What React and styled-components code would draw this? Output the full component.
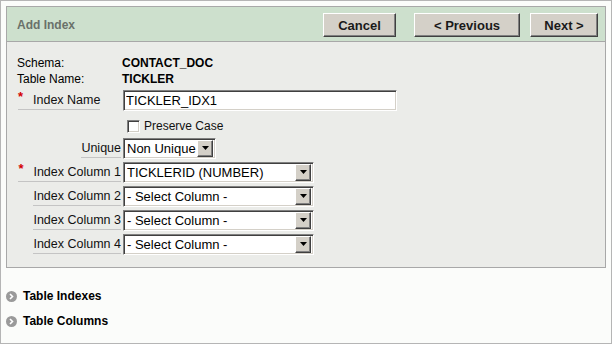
import styled, { createGlobalStyle } from "styled-components";

const GlobalStyle = createGlobalStyle`
  html, body {
    margin: 0;
    padding: 0;
    background: #fbfcfa;
  }
  * {
    box-sizing: border-box;
  }
`;

const Frame = styled.div`
  width: 612px;
  height: 344px;
  border: 1px solid #b5b5b5;
  background: #fbfcfa;
  padding: 5px;
  font-family: "Liberation Sans", Arial, sans-serif;
  font-size: 12px;
  color: #000;
`;

const Panel = styled.div`
  border: 1px solid #a8a8a8;
  background: #ebece9;
`;

const Header = styled.div`
  height: 35px;
  border-bottom: 1px solid #a8a8a8;
  background: #cde0cd;
  display: flex;
  align-items: center;
  padding: 2px 7px 0 10px;
`;

const Title = styled.div`
  flex: 1;
  font-weight: bold;
  font-size: 12px;
  color: #6a716a;
`;

const Button = styled.button`
  height: 24px;
  width: ${(p) => p.$w}px;
  margin-left: ${(p) => p.$gap}px;
  padding: 0;
  background: #d4d0c8;
  border: 1px solid;
  border-color: #ffffff #404040 #404040 #ffffff;
  box-shadow: inset -1px -1px #808080;
  font-family: "Liberation Sans", Arial, sans-serif;
  font-weight: bold;
  font-size: 13px;
  color: #1a1a1a;
`;

const Body = styled.div`
  padding: 13px 10px 12px 10px;
`;

const Info = styled.div`
  display: grid;
  grid-template-columns: 105px auto;
  grid-auto-rows: 16px;
  align-items: center;
  margin-bottom: 3px;
`;

const InfoValue = styled.span`
  font-weight: bold;
`;

const Form = styled.div`
  display: grid;
  grid-template-columns: 104px auto;
  column-gap: 2px;
  row-gap: 3px;
  grid-auto-rows: 21px;
  align-items: center;
`;

const LabelCell = styled.div`
  display: flex;
  justify-content: ${(p) => (p.$left ? "flex-start" : "flex-end")};
  padding-left: ${(p) => (p.$left ? "1px" : "0")};
`;

const Label = styled.label`
  display: flex;
  align-items: center;
  font-size: 12.5px;
  color: #111;
  line-height: 18px;
  border-bottom: 1px solid #c4c4c4;
`;

const Req = styled.span`
  color: #d40000;
  font-weight: bold;
  font-size: 13px;
  width: 15px;
  position: relative;
  top: -3px;
`;

const TextInput = styled.input`
  width: 274px;
  height: 21px;
  padding: 0 2px;
  font-family: "Liberation Sans", Arial, sans-serif;
  font-size: 13px;
  color: #000;
  background: #fff;
  border: 1px solid;
  border-color: #808080 #ffffff #ffffff #808080;
  box-shadow: inset 1px 1px #404040, inset -1px -1px #d4d0c8;
  outline: none;
`;

const CheckRow = styled.label`
  display: flex;
  align-items: center;
  gap: 4px;
  padding: 3px 0 0 4px;
  font-size: 12px;
  color: #111;
`;

const CheckBox = styled.span`
  width: 13px;
  height: 13px;
  background: #fff;
  border: 1px solid;
  border-color: #808080 #ffffff #ffffff #808080;
  box-shadow: inset 1px 1px #404040, inset -1px -1px #d4d0c8;
`;

const SelectBox = styled.div`
  width: ${(p) => p.$w}px;
  height: 21px;
  display: flex;
  align-items: center;
  background: #fff;
  border: 1px solid;
  border-color: #808080 #ffffff #ffffff #808080;
  box-shadow: inset 1px 1px #404040, inset -1px -1px #d4d0c8;
  padding: 2px 2px 2px 3px;
  font-size: 13px;
  color: #000;
`;

const SelectText = styled.span`
  flex: 1;
  white-space: nowrap;
  overflow: hidden;
`;

const ArrowBtn = styled.span`
  width: 16px;
  height: 17px;
  display: flex;
  align-items: center;
  justify-content: center;
  background: #d4d0c8;
  border: 1px solid;
  border-color: #ffffff #404040 #404040 #ffffff;
  box-shadow: inset -1px -1px #808080;
`;

const Links = styled.div`
  display: flex;
  flex-direction: column;
  gap: 9px;
  padding: 20px 0 0 0;
`;

const LinkRow = styled.div`
  display: flex;
  align-items: center;
  gap: 6px;
  font-weight: bold;
  font-size: 12px;
  line-height: 16px;
`;

const Arrow = () => (
  <svg width="7" height="5" viewBox="0 0 7 5">
    <path d="M0 0H7L3.5 4Z" fill="#000" />
  </svg>
);

const Select = ({ w, value }) => (
  <SelectBox $w={w}>
    <SelectText>{value}</SelectText>
    <ArrowBtn>
      <Arrow />
    </ArrowBtn>
  </SelectBox>
);

const CircleIcon = () => (
  <svg width="11" height="11" viewBox="0 0 11 11">
    <circle cx="5.5" cy="5.5" r="5.5" fill="#9a9a9a" />
    <path d="M4 3L6.5 5.5L4 8" stroke="#fff" strokeWidth="1.6" fill="none" />
  </svg>
);

const columns = [
  { n: 1, value: "TICKLERID (NUMBER)", req: true },
  { n: 2, value: "- Select Column -" },
  { n: 3, value: "- Select Column -" },
  { n: 4, value: "- Select Column -" },
];

const App = () => {
  return (
    <Frame>
      <GlobalStyle />
      <Panel>
        <Header>
          <Title>Add Index</Title>
          <Button $w={73} $gap={0}>Cancel</Button>
          <Button $w={106} $gap={18}>&lt; Previous</Button>
          <Button $w={68} $gap={10}>Next &gt;</Button>
        </Header>
        <Body>
          <Info>
            <span>Schema:</span>
            <InfoValue>CONTACT_DOC</InfoValue>
            <span>Table Name:</span>
            <InfoValue>TICKLER</InfoValue>
          </Info>
          <Form>
            <LabelCell $left>
              <Label>
                <Req>*</Req>Index Name
              </Label>
            </LabelCell>
            <TextInput defaultValue="TICKLER_IDX1" />

            <span />
            <CheckRow>
              <CheckBox />
              Preserve Case
            </CheckRow>

            <LabelCell>
              <Label>Unique</Label>
            </LabelCell>
            <Select w={93} value="Non Unique" />

            {columns.map((c) => (
              <>
                <LabelCell key={"l" + c.n}>
                  <Label>
                    {c.req && <Req>*</Req>}Index Column {c.n}
                  </Label>
                </LabelCell>
                <Select key={"s" + c.n} w={191} value={c.value} />
              </>
            ))}
          </Form>
        </Body>
      </Panel>
      <Links>
        <LinkRow>
          <CircleIcon />
          Table Indexes
        </LinkRow>
        <LinkRow>
          <CircleIcon />
          Table Columns
        </LinkRow>
      </Links>
    </Frame>
  );
};

export default App;
